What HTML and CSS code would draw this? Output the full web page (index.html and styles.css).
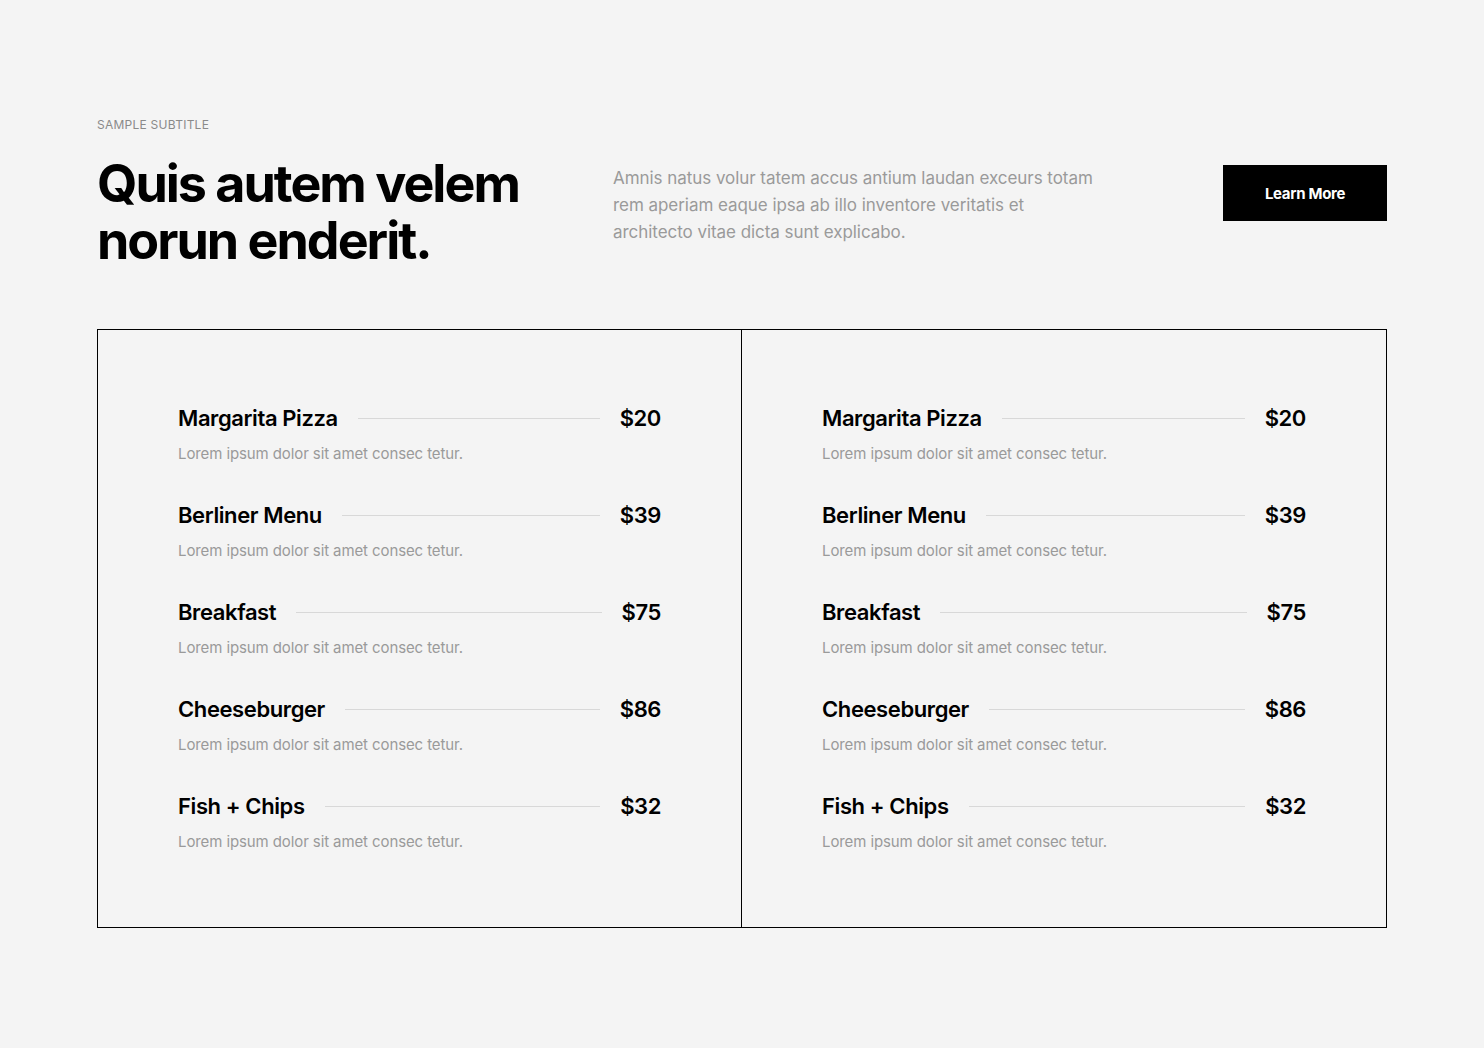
FILE: index.html
```html
<!DOCTYPE html>
<html lang="en">
<head>
<meta charset="utf-8">
<title>Menu</title>
<link rel="stylesheet" href="styles.css">
</head>
<body>
<section class="page">
  <p class="subtitle">Sample Subtitle</p>
  <div class="header-row">
    <h1 class="title">Quis autem velem<br>norun enderit.</h1>
    <p class="intro">Amnis natus volur tatem accus antium laudan exceurs totam rem aperiam eaque ipsa ab illo inventore veritatis et architecto vitae dicta sunt explicabo.</p>
    <a class="btn" href="#">Learn More</a>
  </div>
  <div class="menu">
    <div class="menu-col">
      <div class="item"><div class="item-head"><span class="name">Margarita Pizza</span><span class="rule"></span><span class="price">$20</span></div><p class="desc">Lorem ipsum dolor sit amet consec tetur.</p></div>
      <div class="item"><div class="item-head"><span class="name">Berliner Menu</span><span class="rule"></span><span class="price">$39</span></div><p class="desc">Lorem ipsum dolor sit amet consec tetur.</p></div>
      <div class="item"><div class="item-head"><span class="name">Breakfast</span><span class="rule"></span><span class="price">$75</span></div><p class="desc">Lorem ipsum dolor sit amet consec tetur.</p></div>
      <div class="item"><div class="item-head"><span class="name">Cheeseburger</span><span class="rule"></span><span class="price">$86</span></div><p class="desc">Lorem ipsum dolor sit amet consec tetur.</p></div>
      <div class="item"><div class="item-head"><span class="name">Fish + Chips</span><span class="rule"></span><span class="price">$32</span></div><p class="desc">Lorem ipsum dolor sit amet consec tetur.</p></div>
    </div>
    <div class="menu-col">
      <div class="item"><div class="item-head"><span class="name">Margarita Pizza</span><span class="rule"></span><span class="price">$20</span></div><p class="desc">Lorem ipsum dolor sit amet consec tetur.</p></div>
      <div class="item"><div class="item-head"><span class="name">Berliner Menu</span><span class="rule"></span><span class="price">$39</span></div><p class="desc">Lorem ipsum dolor sit amet consec tetur.</p></div>
      <div class="item"><div class="item-head"><span class="name">Breakfast</span><span class="rule"></span><span class="price">$75</span></div><p class="desc">Lorem ipsum dolor sit amet consec tetur.</p></div>
      <div class="item"><div class="item-head"><span class="name">Cheeseburger</span><span class="rule"></span><span class="price">$86</span></div><p class="desc">Lorem ipsum dolor sit amet consec tetur.</p></div>
      <div class="item"><div class="item-head"><span class="name">Fish + Chips</span><span class="rule"></span><span class="price">$32</span></div><p class="desc">Lorem ipsum dolor sit amet consec tetur.</p></div>
    </div>
  </div>
</section>
</body>
</html>
```
FILE: styles.css
```css
* { box-sizing: border-box; }
html, body { margin: 0; padding: 0; }
body {
  background: #f4f4f4;
  font-family: Inter, "Noto Sans", Arial, sans-serif;
  color: #000;
}
.page {
  width: 1290px;
  margin: 0 auto;
  padding-top: 117px;
}
.subtitle {
  margin: 0;
  font-size: 12px;
  line-height: 16px;
  color: #8a8a8a;
  text-transform: uppercase;
  letter-spacing: 0.25px;
}
.header-row {
  display: flex;
  align-items: flex-start;
  margin-top: 22px;
}
.title {
  margin: 0;
  width: 516px;
  font-size: 52px;
  line-height: 57px;
  font-weight: 700;
  letter-spacing: -2px;
}
.intro {
  margin: 10px 0 0;
  width: 484px;
  font-size: 17px;
  line-height: 27px;
  color: #9a9a9a;
  letter-spacing: -0.05px;
}
.btn {
  margin-left: auto;
  margin-top: 10px;
  width: 164px;
  height: 56px;
  background: #000;
  color: #fff;
  display: flex;
  align-items: center;
  justify-content: center;
  font-size: 15px;
  font-weight: 700;
  text-decoration: none;
  letter-spacing: -0.3px;
}
.menu {
  margin-top: 60px;
  border: 1px solid #000;
  display: grid;
  grid-template-columns: 644px 1fr;
}
.menu-col {
  padding: 73px 80px 73px;
  display: flex;
  flex-direction: column;
  gap: 34px;
}
.menu-col:first-child { border-right: 1px solid #000; }
.item-head {
  display: flex;
  align-items: center;
  height: 30px;
}
.name, .price {
  font-size: 22px;
  font-weight: 600;
  letter-spacing: -0.4px;
  white-space: nowrap;
}
.rule {
  flex: 1;
  height: 1px;
  background: #d8d8d8;
  margin: 0 20px;
}
.desc {
  margin: 9px 0 0;
  font-size: 15px;
  line-height: 24px;
  color: #9a9a9a;
  letter-spacing: -0.1px;
}
```
